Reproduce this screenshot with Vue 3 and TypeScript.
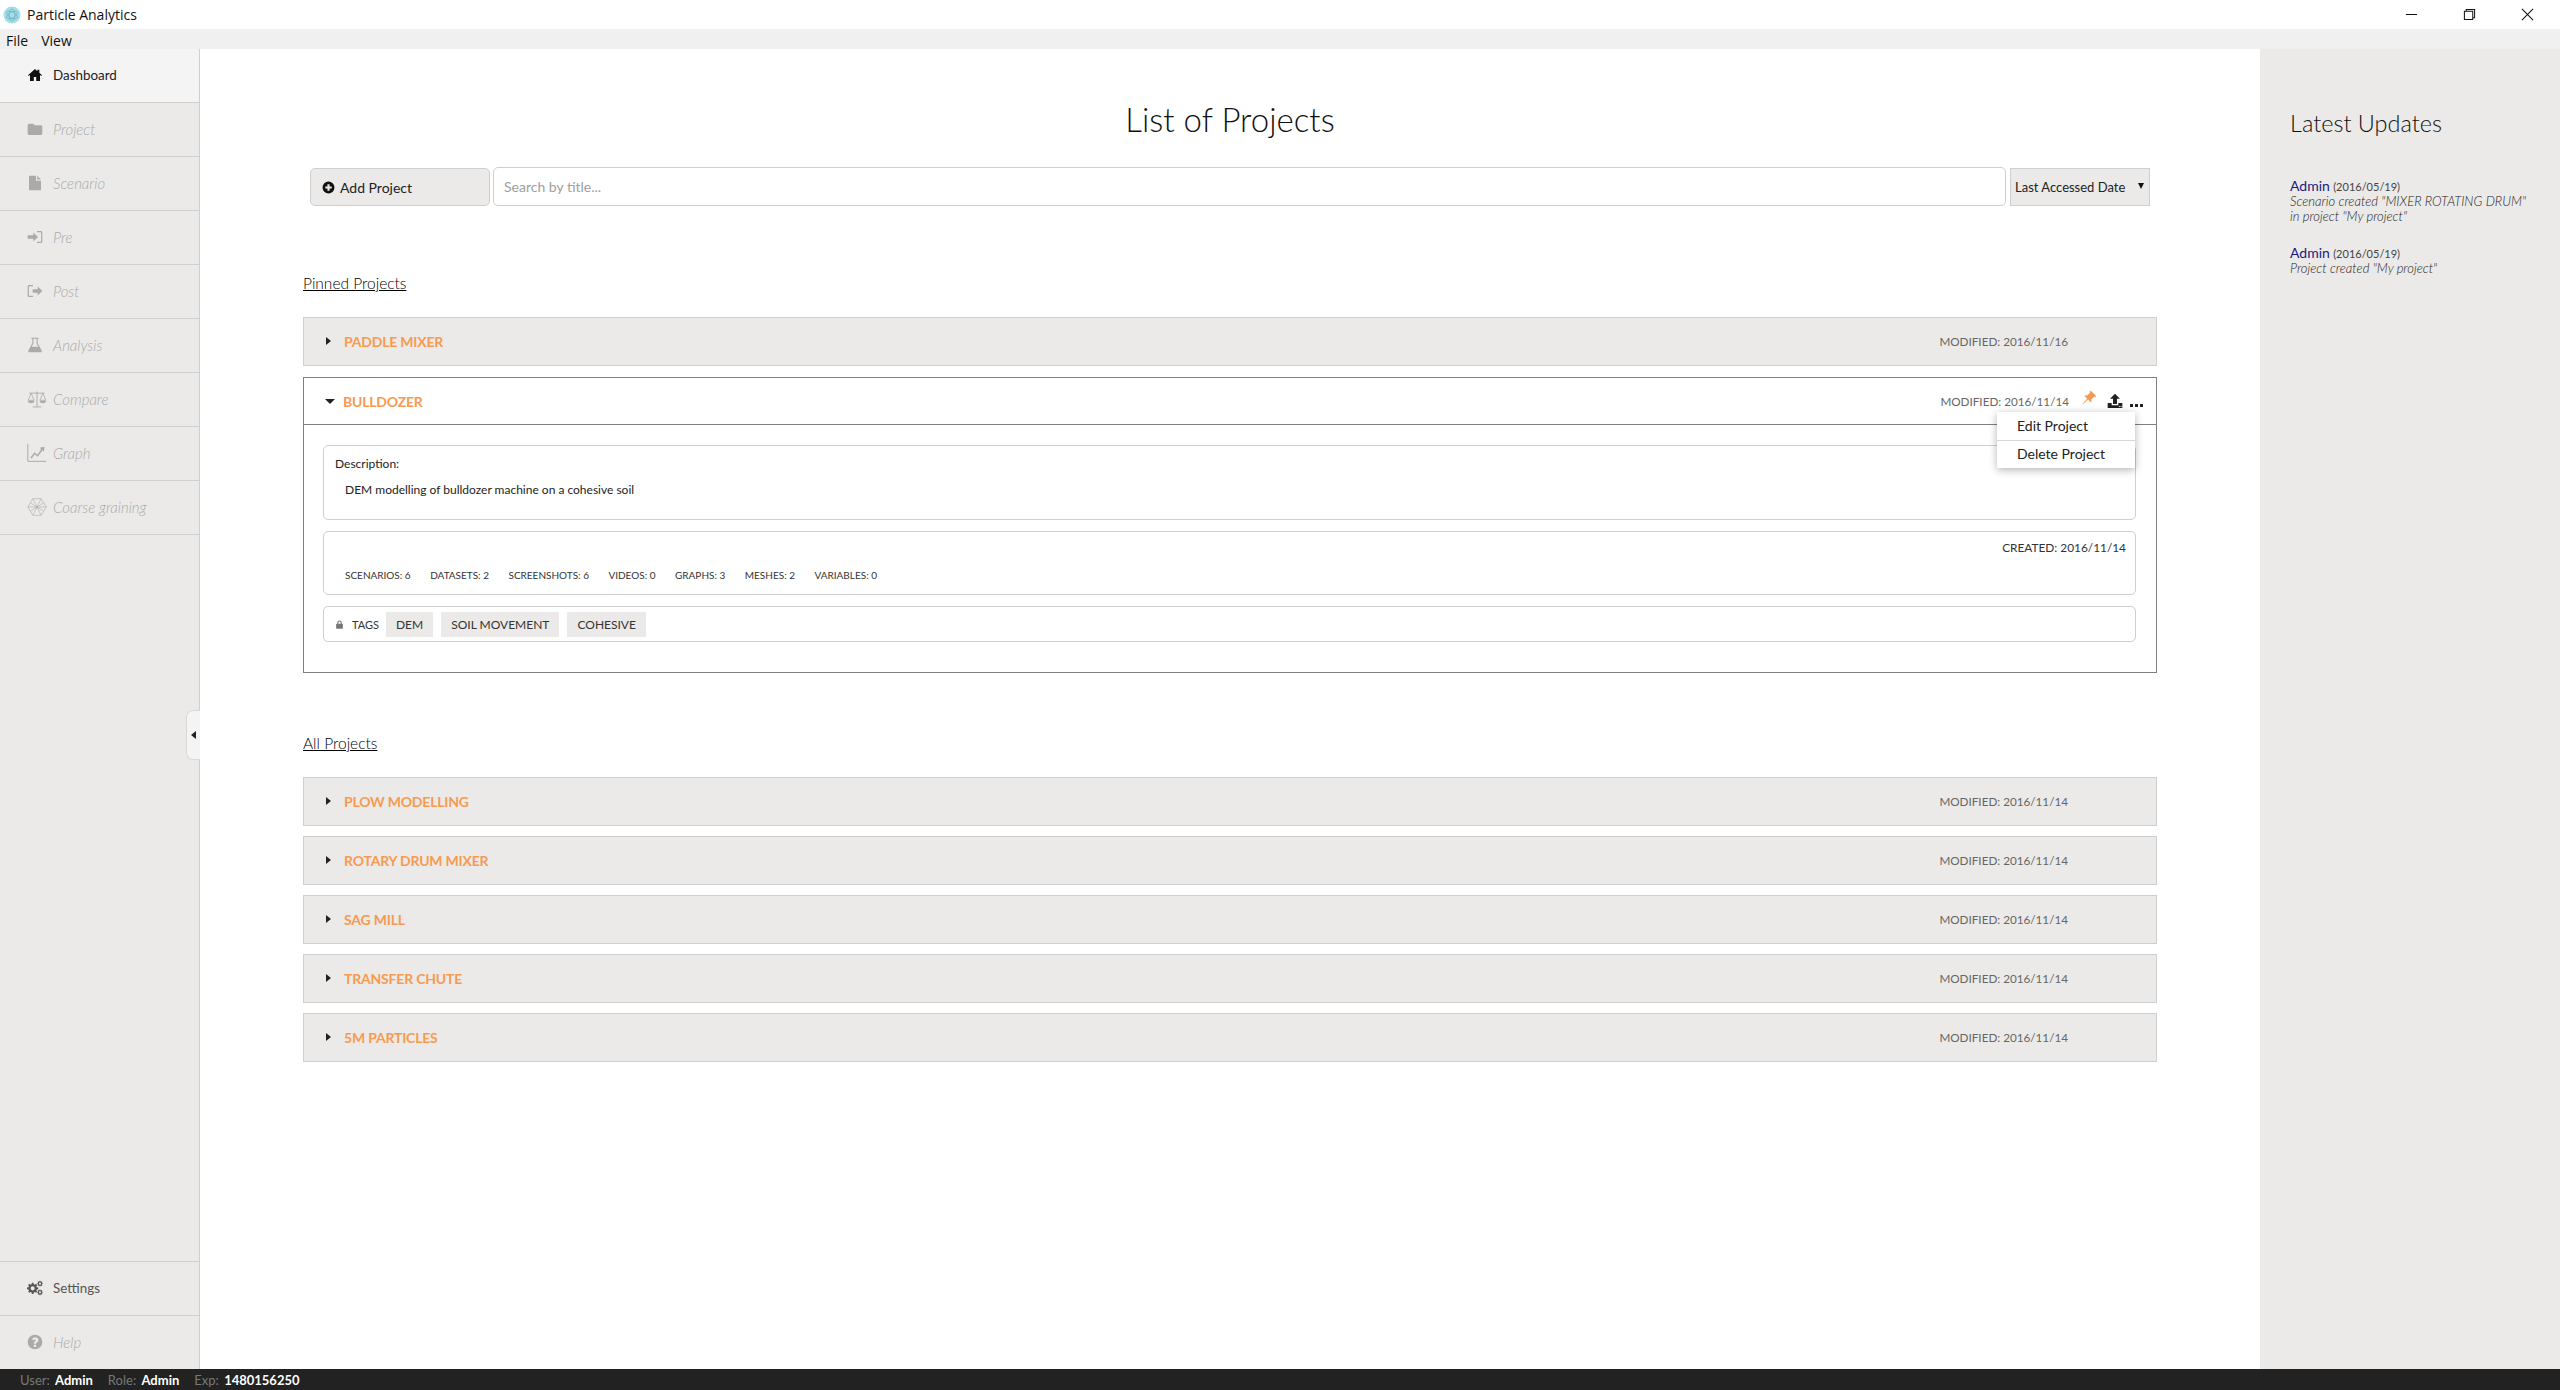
<script setup lang="ts">
interface Shape { d: string; fill?: boolean; sw?: number }
type Icon = Shape[]

function gear(cx: number, cy: number, r: number, teeth: number, hole: number): string {
  const pts: string[] = []
  const step = (Math.PI * 2) / teeth
  for (let i = 0; i < teeth; i++) {
    const a = i * step
    const spots: [number, number][] = [
      [a - step * 0.32, r * 0.76],
      [a - step * 0.18, r],
      [a + step * 0.18, r],
      [a + step * 0.32, r * 0.76],
    ]
    for (const [t, rad] of spots) {
      pts.push(`${(cx + Math.cos(t) * rad).toFixed(2)} ${(cy + Math.sin(t) * rad).toFixed(2)}`)
    }
  }
  const c = `M${cx - hole} ${cy}a${hole} ${hole} 0 1 0 ${hole * 2} 0a${hole} ${hole} 0 1 0 ${-hole * 2} 0z`
  return `M${pts.join('L')}z${c}`
}

const icons: Record<string, Icon> = {
  home: [{ d: 'M12 3 1.5 12.2l1.2 1.3L4.5 12v9h5.7v-6h3.6v6h5.700V12l1.800 1.500 1.200-1.300L18.500 8.800V4.300h-3v2L12 3z' }],
  folder: [{ d: 'M1 6.500C1 5.100 2 4 3.500 4h5c1.200 0 1.800.5 2.300 1.500l.4.8h9.300C21.900 6.300 23 7.300 23 8.800v10C23 20.100 21.900 21 20.500 21h-17C2 21 1 20.100 1 18.800z' }],
  file: [{ d: 'M3 1h10.500v7.500H21v14.500H3zM15.200 1.200 21 6.800h-5.800z' }],
  signin: [{ d: 'M1 9.200h8.500V5.200l7 6.800-7 6.800v-4H1zM15 3h5.500C21.900 3 23 4 23 5.400v13.200c0 1.400-1.100 2.400-2.500 2.400H15v-1.700h5c.6 0 1.200-.4 1.200-1.100V5.800c0-.7-.6-1.100-1.200-1.100h-5z' }],
  signout: [{ d: 'M9 3H3.500C2.100 3 1 4 1 5.400v13.200C1 20 2.100 21 3.500 21H9v-1.700H4c-.6 0-1.200-.4-1.200-1.100V5.800c0-.7.6-1.100 1.200-1.100h5zM8.500 9.200H16V5.200l7 6.800-7 6.800v-4H8.500z' }],
  flask: [{ d: 'M6.500 1h11v1.500H16v6.800l6 10.800c.6 1.300-.2 2.900-1.700 2.900H3.700c-1.500 0-2.300-1.600-1.700-2.900l6-10.800V2.500H6.500zM9.700 2.500v7.200L7 14.500h10l-2.700-4.800V2.500z' }],
  scale: [
    { d: 'M12 3v18M7 21.500h10M3 5h18', fill: false, sw: 1.100 },
    { d: 'M5 5 1.500 13.500h7zM19 5l-3.500 8.500h7z', fill: false, sw: 0.900 },
    { d: 'M1 14h8c-.3 2-2 3-4 3s-3.700-1-4-3zM15 14h8c-.3 2-2 3-4 3s-3.700-1-4-3z' },
  ],
  graph: [
    { d: 'M1 1v21h22', fill: false, sw: 1.200 },
    { d: 'M4 17.500 9 11l3.500 3L17 7.500l-1.800-1.800L21 4.500l-.8 6-1.600-1.700-5.800 7.700-3.500-3-3.700 5z' },
  ],
  coarse: [
    { d: 'M7 2h10l6 10-6 10H7L1 12zM7 2l10 20M17 2 7 22M1 12h22M4 7l16 10M20 7 4 17', fill: false, sw: 0.700 },
  ],
  cogs: [{ d: gear(8.500, 12.500, 8.500, 8, 3.100) + gear(19.500, 5.500, 4.300, 8, 1.600) + gear(19.500, 18.500, 4.300, 8, 1.600) }],
  help: [{ d: 'M12 1a11 11 0 1 0 0 22 11 11 0 0 0 0-22zm1.800 18.500h-3.600V16h3.600zm2.700-8.300c-.5.800-1.200 1.200-1.800 1.600-.6.400-.9.800-.9 1.600v.4h-3.500v-.8c0-1.500.7-2.300 1.700-3 .7-.4 1.200-.8 1.200-1.500 0-.8-.7-1.200-1.400-1.200-.9 0-1.500.4-2.100 1.200L7.500 7.800C8.500 6.200 10.100 5 12.400 5c2.500 0 4.800 1.600 4.800 4 0 .9-.3 1.600-.7 2.200z' }],
  plus: [{ d: 'M12 1a11 11 0 1 0 0 22 11 11 0 0 0 0-22zm6 13h-4v4h-4v-4H6v-4h4V6h4v4h4z' }],
  pin: [{ d: 'M14 1 23 10l-1.800 1.300-1.500-.6-4.700 3.900c.5 2 .2 3.800-.8 5.200L9.700 15.300 2.500 22 1.500 21.500 8.200 13.800 3.800 9.300c1.500-1 3.300-1.300 5.200-.8l3.900-4.700-.5-1.500z' }],
  upload: [{ d: 'M12 1 19.500 8.500h-4.500v8H9v-8H4.500zM1 15h6v3.500h10V15h6v7.500H1zM17.800 19.500h1.500V21h-1.500zm2.500 0h1.500V21h-1.500z' }],
  lock: [{ d: 'M6 10V7a6 6 0 0 1 12 0v3h1.500c.8 0 1.500.7 1.500 1.500v10c0 .8-.7 1.500-1.500 1.500h-15c-.8 0-1.500-.7-1.500-1.500v-10c0-.8.7-1.500 1.500-1.500zm3 0h6V7a3 3 0 0 0-6 0z' }],
}

interface NavItem { label: string; icon: string; state: 'active' | 'off' | 'on'; wide?: boolean }

const topNav: NavItem[] = [
  { label: 'Dashboard', icon: 'home', state: 'active' },
  { label: 'Project', icon: 'folder', state: 'off' },
  { label: 'Scenario', icon: 'file', state: 'off' },
  { label: 'Pre', icon: 'signin', state: 'off' },
  { label: 'Post', icon: 'signout', state: 'off' },
  { label: 'Analysis', icon: 'flask', state: 'off' },
  { label: 'Compare', icon: 'scale', state: 'off', wide: true },
  { label: 'Graph', icon: 'graph', state: 'off', wide: true },
  { label: 'Coarse graining', icon: 'coarse', state: 'off', wide: true },
]
const bottomNav: NavItem[] = [
  { label: 'Settings', icon: 'cogs', state: 'on' },
  { label: 'Help', icon: 'help', state: 'off' },
]

const pinned = { title: 'Paddle Mixer', date: '2016/11/16' }
const allProjects = ['Plow Modelling', 'Rotary Drum Mixer', 'SAG Mill', 'Transfer Chute', '5M Particles'].map((title) => ({
  title,
  date: '2016/11/14',
}))
const stats = ['Scenarios: 6', 'Datasets: 2', 'Screenshots: 6', 'Videos: 0', 'Graphs: 3', 'Meshes: 2', 'Variables: 0']
const tags = ['DEM', 'Soil Movement', 'Cohesive']
const updates = [
  { who: 'Admin', date: '(2016/05/19)', lines: ['Scenario created "MIXER ROTATING DRUM"', 'in project "My project"'] },
  { who: 'Admin', date: '(2016/05/19)', lines: ['Project created "My project"'] },
]
</script>

<template>
  <div class="app">
    <header class="titlebar">
      <svg class="logo" viewBox="0 0 18 18">
        <circle cx="9" cy="9" r="8.500" fill="#a5dde8" />
        <g fill="none" stroke="#6fb3c6" stroke-width="0.800">
          <ellipse cx="9" cy="9" rx="6" ry="3" transform="rotate(30 9 9)" />
          <ellipse cx="9" cy="9" rx="6" ry="3" transform="rotate(-30 9 9)" />
          <ellipse cx="9" cy="9" rx="6" ry="3" transform="rotate(90 9 9)" />
        </g>
      </svg>
      <span class="apptitle">Particle Analytics</span>
      <div class="winctl">
        <svg viewBox="0 0 14 14"><path d="M1 7h12" /></svg>
        <svg viewBox="0 0 14 14"><path d="M1.500 3.500h9v9h-9zM3.500 3.500v-2h9v9h-2" /></svg>
        <svg viewBox="0 0 14 14"><path d="M1 1l12 12M13 1 1 13" /></svg>
      </div>
    </header>
    <nav class="menubar"><span>File</span><span>View</span></nav>

    <div class="body">
      <aside class="sidebar">
        <div class="navgroup">
          <div v-for="item in topNav" :key="item.label" class="navitem" :class="item.state">
            <span class="navicon">
              <svg :class="{ wide: item.wide }" viewBox="0 0 24 24">
                <path
                  v-for="(s, i) in icons[item.icon]"
                  :key="i"
                  :d="s.d"
                  fill-rule="evenodd"
                  :fill="s.fill === false ? 'none' : 'currentColor'"
                  :stroke="s.fill === false ? 'currentColor' : 'none'"
                  :stroke-width="s.sw"
                />
              </svg>
            </span>
            <span>{{ item.label }}</span>
          </div>
        </div>
        <div class="navgroup">
          <div v-for="item in bottomNav" :key="item.label" class="navitem bottom" :class="item.state">
            <span class="navicon">
              <svg viewBox="0 0 24 24">
                <path v-for="(s, i) in icons[item.icon]" :key="i" :d="s.d" fill-rule="evenodd" fill="currentColor" />
              </svg>
            </span>
            <span>{{ item.label }}</span>
          </div>
        </div>
        <button class="collapse" type="button" aria-label="Collapse"><i></i></button>
      </aside>

      <main class="main">
        <h1>List of Projects</h1>
        <div class="toolbar">
          <button class="addbtn" type="button">
            <svg viewBox="0 0 24 24"><path :d="icons.plus[0].d" fill="#111" fill-rule="evenodd" /></svg>
            Add Project
          </button>
          <input class="search" type="text" placeholder="Search by title..." />
          <div class="sort"><span>Last Accessed Date</span><i></i></div>
        </div>

        <h2 class="section first">Pinned Projects</h2>
        <div class="row">
          <i class="caret"></i>
          <span class="rowtitle">{{ pinned.title }}</span>
          <span class="modified">Modified: {{ pinned.date }}</span>
        </div>

        <section class="card">
          <div class="cardhead">
            <i class="caret down"></i>
            <span class="rowtitle">Bulldozer</span>
            <span class="modified">Modified: 2016/11/14</span>
            <svg class="act pin" viewBox="0 0 24 24"><path :d="icons.pin[0].d" fill="#f79a50" /></svg>
            <svg class="act upl" viewBox="0 0 24 24"><path :d="icons.upload[0].d" fill="#222" fill-rule="evenodd" /></svg>
            <span class="dots"><i></i><i></i><i></i></span>
          </div>
          <div class="menu">
            <div>Edit Project</div>
            <div>Delete Project</div>
          </div>
          <div class="cardbody">
            <div class="box desc">
              <div class="desclabel">Description:</div>
              <div class="desctext">DEM modelling of bulldozer machine on a cohesive soil</div>
            </div>
            <div class="box statbox">
              <div class="created">Created: 2016/11/14</div>
              <div class="stats"><span v-for="s in stats" :key="s">{{ s }}</span></div>
            </div>
            <div class="box tagbox">
              <svg class="lock" viewBox="0 0 24 24"><path :d="icons.lock[0].d" fill="#777" fill-rule="evenodd" /></svg>
              <span class="taglabel">Tags</span>
              <span v-for="t in tags" :key="t" class="tag">{{ t }}</span>
            </div>
          </div>
        </section>

        <h2 class="section">All Projects</h2>
        <div class="rows">
          <div v-for="p in allProjects" :key="p.title" class="row">
            <i class="caret"></i>
            <span class="rowtitle">{{ p.title }}</span>
            <span class="modified">Modified: {{ p.date }}</span>
          </div>
        </div>
      </main>

      <aside class="updates">
        <h3>Latest Updates</h3>
        <div v-for="(u, i) in updates" :key="i" class="update">
          <div><span class="who">{{ u.who }}</span> <span class="when">{{ u.date }}</span></div>
          <div v-for="l in u.lines" :key="l" class="what">{{ l }}</div>
        </div>
      </aside>
    </div>

    <footer class="status">
      <span>User: <b>Admin</b></span>
      <span>Role: <b>Admin</b></span>
      <span>Exp: <b>1480156250</b></span>
    </footer>
  </div>
</template>

<style scoped>
.app {
  height: 1390px;
  display: flex;
  flex-direction: column;
  overflow: hidden;
  font-family: Lato, "Liberation Sans", sans-serif;
  color: #222;
  background: #fff;
}
.titlebar {
  height: 29px;
  flex: none;
  display: flex;
  align-items: center;
  padding-left: 3px;
  background: #fff;
}
.logo { width: 18px; height: 18px; }
.apptitle {
  margin-left: 6px;
  font: 14px "Open Sans", sans-serif;
  color: #111;
}
.winctl {
  margin-left: auto;
  display: flex;
  gap: 45px;
  padding-right: 26px;
  padding-bottom: 1px;
}
.winctl svg { width: 13px; height: 13px; }
.winctl path { fill: none; stroke: #111; stroke-width: 1.100; }
.menubar {
  height: 20px;
  flex: none;
  display: flex;
  gap: 13px;
  padding-left: 6px;
  padding-top: 2px;
  box-sizing: border-box;
  align-items: center;
  background: #f0f0f0;
  font: 14px "Open Sans", sans-serif;
  color: #111;
}
.body { flex: 1; min-height: 0; display: flex; }

.sidebar {
  position: relative;
  width: 199px;
  flex: none;
  display: flex;
  flex-direction: column;
  justify-content: space-between;
  background: #ebeae8;
  border-right: 1px solid #cfcfcf;
}
.navitem {
  height: 53px;
  padding-bottom: 1px;
  box-sizing: border-box;
  display: flex;
  align-items: center;
  padding-left: 27px;
  font-size: 13.400px;
  border-bottom: 1px solid #cfcfcf;
  height: 54px;
}
.navitem.bottom { border-bottom: none; border-top: 1px solid #cfcfcf; }
.navitem.active { background: #f4f4f4; color: #222; }
.navitem.active svg { color: #111; }
.navitem.off { color: #aaa; font-size: 15px; font-style: italic; font-weight: 300; }
.navitem.off svg { color: #aaa; }
.navitem.on { color: #555; }
.navitem.on svg { color: #555; }
.navicon { width: 26px; display: flex; align-items: center; flex: none; }
.navicon svg { width: 16px; height: 16px; }
.navicon svg.wide { width: 20px; height: 20px; }
.collapse {
  position: absolute;
  right: -1px;
  top: 661px;
  width: 14px;
  height: 50px;
  padding: 0;
  display: flex;
  align-items: center;
  justify-content: center;
  background: #f4f4f4;
  border: 1px solid #d8d8d8;
  border-right: none;
  border-radius: 7px 0 0 7px;
}
.collapse i {
  border-style: solid;
  border-width: 4px 5px 4px 0;
  border-color: transparent #222 transparent transparent;
}

.main { flex: 1; min-width: 0; padding: 48px 103px 0 103px; }
h1 {
  margin: 0;
  text-align: center;
  font-size: 33px;
  line-height: 44px;
  font-weight: 300;
  color: #111;
}
.toolbar {
  margin: 26px 7px 0;
  height: 39px;
  display: flex;
  align-items: stretch;
  gap: 3px;
}
.addbtn {
  width: 180px;
  margin-top: 1px;
  display: flex;
  align-items: center;
  gap: 5px;
  padding: 0 0 0 11px;
  background: #ebeae8;
  border: 1px solid #cfcfcf;
  border-radius: 5px;
  font: 14px Lato, sans-serif;
  color: #222;
}
.addbtn svg { width: 13px; height: 13px; }
.search {
  flex: 1;
  min-width: 0;
  padding: 0 10px;
  border: 1px solid #cfcfcf;
  border-radius: 5px;
  font: 14px Lato, sans-serif;
  outline: none;
}
.search::placeholder { color: #a0a0a0; opacity: 1; }
.sort {
  width: 140px;
  margin-top: 1px;
  margin-left: 1px;
  box-sizing: border-box;
  display: flex;
  align-items: center;
  justify-content: space-between;
  padding: 0 5px 0 4px;
  background: #ebeae8;
  border: 1px solid #cfcfcf;
  font-size: 13px;
  color: #111;
  white-space: nowrap;
}
.sort span { font-weight: 400; color: #222; }
.sort i {
  border-style: solid;
  border-width: 6px 3px 0 3px;
  border-color: #111 transparent transparent;
  margin-bottom: 2px;
}
.section {
  margin: 60px 0 24px;
  font-size: 15.500px;
  line-height: 20px;
  font-weight: 300;
  color: #000;
  text-decoration: underline;
}
.section.first { margin-top: 67px; }
.rows { display: flex; flex-direction: column; gap: 10px; }
.row, .cardhead {
  display: flex;
  align-items: center;
  box-sizing: border-box;
  height: 49px;
  padding-left: 22px;
  padding-right: 88px;
}
.row { background: #ebeae8; border: 1px solid #cfcfcf; padding-bottom: 1px; }
.caret {
  width: 18px;
  flex: none;
  position: relative;
  height: 9px;
}
.caret::before {
  content: "";
  position: absolute;
  left: 0;
  top: 0;
  border-style: solid;
  border-width: 4.500px 0 4.500px 5px;
  border-color: transparent transparent transparent #222;
}
.caret.down::before {
  top: 2px;
  border-width: 5px 5px 0;
  border-color: #222 transparent transparent;
}
.rowtitle {
  font-size: 14px;
  font-weight: 700;
  color: #f79a50;
  text-transform: uppercase;
  letter-spacing: -0.200px;
}
.modified {
  margin-left: auto;
  font-size: 11.700px;
  color: #666;
  text-transform: uppercase;
}
.card {
  position: relative;
  margin-top: 11px;
  box-sizing: border-box;
  height: 296px;
  border: 1px solid #808080;
}
.cardhead {
  padding-left: 21px;
  padding-right: 12px;
  border-bottom: 1px solid #808080;
  box-sizing: content-box;
  height: 46px;
}
.act { flex: none; }
.pin { width: 15px; height: 15px; margin-left: 13px; margin-top: -7px; }
.upl { width: 16px; height: 16px; margin-left: 10px; margin-top: -1px; }
.dots { display: flex; gap: 2px; margin-left: 7px; margin-top: 9px; margin-right: 1px; }
.dots i { width: 3px; height: 3px; background: #222; }
.menu {
  position: absolute;
  top: 34px;
  right: 21px;
  width: 138px;
  background: #fff;
  box-shadow: 0 2px 8px rgba(0, 0, 0, 0.3);
  font-size: 14px;
  color: #222;
  z-index: 2;
}
.menu div { height: 28px; line-height: 27px; padding-left: 20px; box-sizing: border-box; }
.menu div + div { border-top: 1px solid #d8d8d8; line-height: 26px; }
.cardbody {
  padding: 20px 20px 0 19px;
  display: flex;
  flex-direction: column;
  gap: 11px;
}
.box { border: 1px solid #cfcfcf; border-radius: 5px; box-sizing: border-box; }
.desc { height: 75px; padding: 10px 11px 0; font-size: 12px; color: #222; }
.desclabel { line-height: 16px; }
.desctext { margin: 10px 0 0 10px; line-height: 16px; }
.statbox { height: 64px; padding: 8px 9px 0 21px; }
.created { text-align: right; font-size: 11.850px; line-height: 16px; color: #333; text-transform: uppercase; }
.stats {
  display: flex;
  gap: 19.500px;
  margin-top: 12px;
  font-size: 10px;
  line-height: 14px;
  color: #333;
  text-transform: uppercase;
}
.tagbox { height: 36px; display: flex; align-items: center; padding-left: 11px; }
.lock { width: 9px; height: 9px; }
.taglabel { margin-left: 8px; margin-right: -1px; font-size: 11px; color: #333; text-transform: uppercase; }
.tag {
  height: 25px;
  line-height: 25px;
  padding: 0 10px;
  margin-left: 8px;
  background: #ebeae8;
  font-size: 12px;
  color: #333;
  text-transform: uppercase;
}

.updates {
  width: 300px;
  flex: none;
  box-sizing: border-box;
  padding: 59px 0 0 30px;
  background: #ebeae8;
}
h3 {
  margin: 0 0 40px;
  font-size: 23.500px;
  line-height: 30px;
  font-weight: 300;
  color: #111;
}
.update { margin-bottom: 21px; font-size: 13px; line-height: 15px; }
.who { font-size: 14px; color: #1a1a80; }
.when { font-size: 11px; color: #444; }
.what { font-style: italic; font-weight: 300; color: #222; }

.status {
  height: 21px;
  flex: none;
  display: flex;
  align-items: center;
  gap: 15px;
  padding-left: 20px;
  background: #222;
  color: #777;
  font-size: 13px;
}
.status b { color: #fff; font-weight: 700; margin-left: 2px; }
</style>

<style>
html, body { margin: 0; overflow: hidden; }
</style>
